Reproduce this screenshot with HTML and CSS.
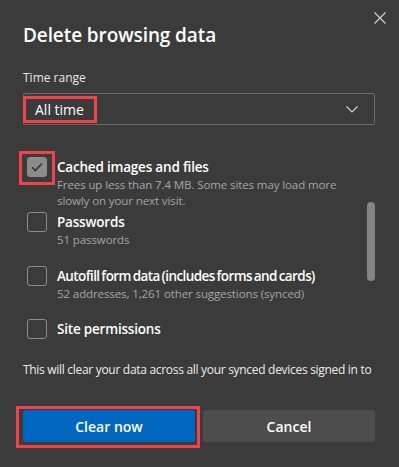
FILE: index.html
```html
<!DOCTYPE html>
<html lang="en">
<head>
  <meta charset="UTF-8" />
  <title>Delete browsing data</title>
  <meta name="viewport" content="width=device-width, initial-scale=1" />
  <link rel="stylesheet" href="styles.css">
</head>
<body>
  <div class="dialog">
    <div class="dialog-header">
      <h2>Delete browsing data</h2>
      <button class="btn-close" aria-label="Close">
        <svg width="12" height="12" viewBox="0 0 12 12"><path d="M0.5 0.5 L11.5 11.5 M11.5 0.5 L0.5 11.5" stroke="#d6d6d6" stroke-width="1.1" fill="none"/></svg>
      </button>
    </div>

    <div class="field-label">Time range</div>
    <div class="select">
      <span class="select-value">All time</span>
      <svg class="chevron" width="12" height="7" viewBox="0 0 12 7"><path d="M0.5 0.5 L6 6 L11.5 0.5" stroke="#d6d6d6" stroke-width="1.1" fill="none"/></svg>
    </div>

    <div class="options-area">
      <div class="options">
        <div class="option tight">
          <span class="mark-box">
            <span class="checkbox checked">
              <svg width="12" height="10" viewBox="0 0 12 10"><path d="M1 5.2 L4.3 8.5 L11 1.5" stroke="#333" stroke-width="1.6" fill="none"/></svg>
            </span>
          </span>
          <div class="option-text">
            <div class="option-title">Cached images and files</div>
            <div class="option-desc">Frees up less than 7.4 MB. Some sites may load more slowly on your next visit.</div>
          </div>
        </div>
        <div class="option">
          <span class="checkbox"></span>
          <div class="option-text">
            <div class="option-title">Passwords</div>
            <div class="option-desc">51 passwords</div>
          </div>
        </div>
        <div class="option">
          <span class="checkbox"></span>
          <div class="option-text">
            <div class="option-title condensed">Autofill form data (includes forms and cards)</div>
            <div class="option-desc">52 addresses, 1,261 other suggestions (synced)</div>
          </div>
        </div>
        <div class="option">
          <span class="checkbox"></span>
          <div class="option-text">
            <div class="option-title">Site permissions</div>
          </div>
        </div>
      </div>
      <div class="scroll-track">
        <div class="scroll-thumb"></div>
      </div>
    </div>

    <p class="sync-note">This will clear your data across all your synced devices signed in to</p>

    <div class="actions">
      <div class="mark-btn">
        <button class="btn btn-primary">Clear now</button>
      </div>
      <button class="btn btn-secondary">Cancel</button>
    </div>
  </div>
</body>
</html>
```

FILE: styles.css
```css
:root {
  --bg: #3b3b3b;
  --text: #ffffff;
  --muted: #a6a6a6;
  --accent: #0067c0;
  --mark: #f0444a;
}

body {
  margin: 0;
  background: var(--bg);
  font-family: 'Open Sans', 'Noto Sans', sans-serif;
  color: var(--text);
}

.dialog {
  width: 399px;
  height: 467px;
  box-sizing: border-box;
  padding: 0 24px 0 23px;
}

.dialog-header {
  display: flex;
  justify-content: space-between;
  align-items: flex-start;
}

.dialog-header h2 {
  margin: 22px 0 0;
  font-size: 19px;
  line-height: 26px;
  font-weight: 600;
  letter-spacing: -0.1px;
}

.btn-close {
  margin: 12px -11px 0 0;
  padding: 0;
  width: 12px;
  height: 12px;
  border: none;
  background: none;
  display: flex;
}

.field-label {
  margin-top: 21px;
  font-size: 12px;
  line-height: 17px;
  color: #e8e8e8;
}

.select {
  margin-top: 7px;
  height: 32px;
  box-sizing: border-box;
  border: 1px solid #6a6a6a;
  border-radius: 2px;
  display: flex;
  align-items: center;
  justify-content: space-between;
  padding-right: 16px;
}

.select-value {
  margin-left: -1px;
  border: 3px solid var(--mark);
  padding: 0 10px 0 9px;
  font-size: 14px;
  line-height: 21px;
}

.options-area {
  margin-top: 32px;
  display: flex;
}

.options {
  flex: 1;
  padding-left: 4px;
}

.option {
  display: flex;
  gap: 10px;
  margin-bottom: 18px;
}

.option.tight {
  margin-bottom: 4px;
}

.checkbox {
  flex: none;
  width: 20px;
  height: 20px;
  box-sizing: border-box;
  border: 1px solid #8c8c8c;
  border-radius: 3px;
  display: flex;
  align-items: center;
  justify-content: center;
}

.checkbox.checked {
  background: #8c8c8c;
}

/* red annotation frames */
.mark-box {
  flex: none;
  align-self: flex-start;
  margin: -6px -8px -8px -8px;
  padding: 3px 5px 5px 5px;
  border: 3px solid var(--mark);
}

.mark-btn {
  display: flex;
  margin: -4px -5px -6px -7px;
  padding: 1px 2px 3px 4px;
  border: 3px solid var(--mark);
}

.mark-btn .btn {
  flex: 1;
}

.option-title {
  font-size: 13.5px;
  line-height: 20px;
  font-weight: 600;
  letter-spacing: -0.2px;
}

.option-title.condensed {
  letter-spacing: -0.6px;
  word-spacing: -1px;
}

.option-desc {
  font-size: 11.5px;
  line-height: 15.5px;
  color: var(--muted);
  letter-spacing: -0.1px;
}

.scroll-track {
  width: 8px;
  flex: none;
}

.scroll-thumb {
  margin-top: 45px;
  height: 79px;
  border-radius: 4px;
  background: #858585;
}

.sync-note {
  margin: 4px 0 0;
  font-size: 12px;
  line-height: 17px;
  color: #ececec;
  white-space: nowrap;
  letter-spacing: -0.3px;
}

.actions {
  margin-top: 32px;
  display: grid;
  grid-template-columns: 1fr 1fr;
  gap: 8px;
}

.btn {
  height: 32px;
  border: none;
  border-radius: 3px;
  font-family: inherit;
  font-size: 14px;
  font-weight: 600;
  color: var(--text);
}

.btn-primary {
  background: var(--accent);
}

.btn-secondary {
  background: #4d4d4d;
}
```
